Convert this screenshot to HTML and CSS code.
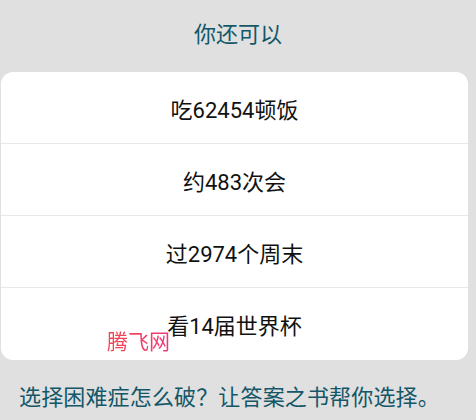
FILE: index.html
```html
<!DOCTYPE html>
<html lang="zh-CN">
<head>
  <meta charset="UTF-8">
  <title>答案之书</title>
  <meta name="viewport" content="width=device-width, initial-scale=1">
  <link rel="stylesheet" href="styles.css">
</head>
<body>

  <h1 class="title">你还可以</h1>

  <!-- 结果列表 -->
  <div class="result-card">
    <div class="result-row">吃62454顿饭</div>
    <div class="result-row">约483次会</div>
    <div class="result-row">过2974个周末</div>
    <div class="result-row last">
      看14届世界杯
      <span class="watermark">腾飞网</span>
    </div>
  </div>

  <p class="footer">选择困难症怎么破？让答案之书帮你选择。</p>

</body>
</html>
```

FILE: styles.css
```css
body {
  margin: 0;
  background: #e0e0e0;
  font-family: Roboto, "Noto Sans CJK SC", sans-serif;
  color: #111;
}
.title {
  margin: 0;
  height: 72px;
  line-height: 70px;
  text-align: center;
  font-size: 22px;
  font-weight: normal;
  color: #135768;
}
.result-card {
  margin: 0 8px 0 1px;
  background: #fff;
  border-radius: 12px;
  overflow: hidden;
}
.result-row {
  height: 72px;
  display: flex;
  align-items: center;
  justify-content: center;
  font-size: 22px;
  border-bottom: 1px solid #e8e8e8;
  box-sizing: border-box;
}
.result-row.last {
  border-bottom: none;
  position: relative;
}
/* 水印 */
.watermark {
  position: absolute;
  left: 106px;
  top: 41px;
  font-size: 21px;
  line-height: 26px;
  background: linear-gradient(90deg, #f2464e, #f0387a);
  -webkit-background-clip: text;
  background-clip: text;
  color: transparent;
}
.footer {
  margin: 0;
  padding: 22px 0 0 19px;
  font-size: 22px;
  letter-spacing: 0.15px;
  line-height: 32px;
  color: #135768;
}
```
